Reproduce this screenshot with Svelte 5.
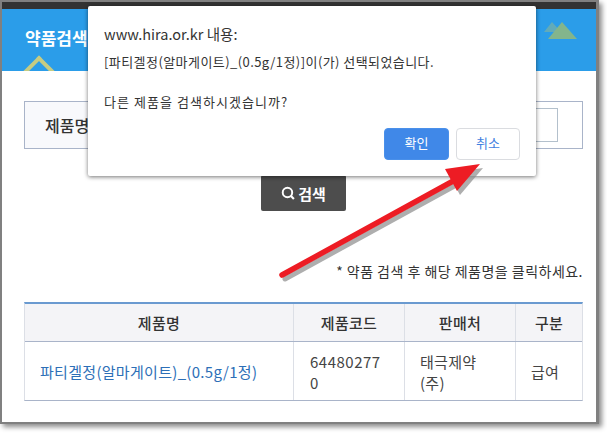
<script>
  const columns = [
    { label: '제품명', cls: 'c1' },
    { label: '제품코드', cls: 'c2' },
    { label: '판매처', cls: 'c3' },
    { label: '구분', cls: 'c4' }
  ];
</script>

<div class="stage">
  <div class="window">
    <div class="topbar"></div>
    <header class="hero">
      <h1>약품검색</h1>
      <span class="notch"></span>
      <svg class="peaks" width="34" height="18" viewBox="0 0 34 18">
        <path d="M0 10 L8 0 L17 10Z" fill="#76b0a8" opacity=".75" />
        <path d="M4 17 L18 0 L33 17Z" fill="#83b58c" />
      </svg>
    </header>
    <main class="content">
      <section class="searchbox">
        <div class="label">제품명</div>
        <div class="field"><div class="input"></div></div>
      </section>
      <div class="actions">
        <button class="search">
          <svg width="14" height="14" viewBox="0 0 13 13">
            <circle cx="6" cy="6" r="4.4" fill="none" stroke="#fff" stroke-width="1.8" />
            <path d="M9 9 L12 12" stroke="#fff" stroke-width="2" />
          </svg>
          검색
        </button>
      </div>
      <p class="note">* 약품 검색 후 해당 제품명을 클릭하세요.</p>
      <div class="table">
        <div class="row head">
          {#each columns as col}
            <div class="cell {col.cls}">{col.label}</div>
          {/each}
        </div>
        <div class="row body">
          <div class="cell c1 link">파티겔정(알마게이트)_(0.5g/1정)</div>
          <div class="cell c2 left">64480277<br />0</div>
          <div class="cell c3 left">태극제약<br />(주)</div>
          <div class="cell c4 tag">급여</div>
        </div>
      </div>
    </main>
  </div>

  <div class="dialog">
    <div class="origin">www.hira.or.kr 내용:</div>
    <div class="message">[파티겔정(알마게이트)_(0.5g/1정)]이(가) 선택되었습니다.</div>
    <div class="message second">다른 제품을 검색하시겠습니까?</div>
    <div class="buttons">
      <button class="ok">확인</button>
      <button class="cancel">취소</button>
    </div>
  </div>

  <svg class="arrow" width="607" height="433" viewBox="0 0 607 433">
    <g transform="translate(3 4)" opacity=".7">
      <path d="M282 275 L455 180" stroke="#8c8c8c" stroke-width="5" stroke-linecap="round" />
      <path d="M445 169 L480 164 L457 191Z" fill="#8c8c8c" />
    </g>
    <path d="M282 275 L455 180" stroke="#ed1c24" stroke-width="5.5" stroke-linecap="round" />
    <path d="M445 169 L480 164 L457 191Z" fill="#ed1c24" />
  </svg>
</div>

<style>
  :global(body) {
    margin: 0;
    background: #fff;
  }
  .stage {
    position: relative;
    width: 607px;
    height: 433px;
    overflow: hidden;
    font-family: "Noto Sans CJK KR", "Noto Sans", sans-serif;
    color: #333;
  }
  .window {
    box-sizing: border-box;
    width: 599px;
    height: 424px;
    border: solid #808080;
    border-width: 2px 3px 2px 2px;
    background: #fff;
    box-shadow: 3px 3px 5px rgba(0, 0, 0, 0.45);
  }
  .topbar {
    height: 7px;
    background: #333;
  }
  .hero {
    position: relative;
    height: 62px;
    box-sizing: border-box;
    padding: 16px 0 0 23px;
    background: #2b9de9;
    overflow: hidden;
  }
  .hero h1 {
    margin: 0;
    font-size: 17px;
    line-height: 26px;
    font-weight: 700;
    color: #fff;
  }
  .notch {
    position: absolute;
    left: 26px;
    top: 51px;
    width: 18px;
    height: 18px;
    border: solid #c6cc82;
    border-width: 4px 0 0 4px;
    transform: rotate(45deg);
  }
  .peaks {
    position: absolute;
    right: 18px;
    top: 13px;
  }
  .content {
    padding: 30px 13px 0 22px;
  }
  .searchbox {
    display: flex;
    height: 48px;
    box-sizing: border-box;
    border: 1px solid #a9b4c9;
  }
  .label {
    width: 110px;
    padding: 0 0 0 20px;
    box-sizing: border-box;
    background: #f8f9fc;
    font-size: 16px;
    font-weight: 500;
    line-height: 46px;
    color: #333;
  }
  .field {
    flex: 1;
    display: flex;
    justify-content: flex-end;
    padding: 6px 24px 6px 0;
  }
  .input {
    width: 120px;
    box-sizing: border-box;
    border: 1px solid #b3c0cc;
  }
  .actions {
    display: flex;
    justify-content: center;
    padding-top: 26px;
  }
  .search {
    display: flex;
    align-items: center;
    justify-content: center;
    gap: 3px;
    width: 85px;
    height: 36px;
    border: 0;
    border-radius: 2px;
    background: #4d4d4d;
    color: #fff;
    font: 700 15px "Noto Sans CJK KR", sans-serif;
  }
  .note {
    margin: 48px 0 0;
    text-align: right;
    font-size: 14px;
    line-height: 24px;
    letter-spacing: 0.48px;
    color: #333;
  }
  .table {
    margin-top: 19px;
    border-top: 2px solid #6a9ad0;
    border-left: 1px solid #dcdfe6;
    border-right: 1px solid #dcdfe6;
    border-bottom: 1px solid #a9b4c9;
  }
  .row {
    display: grid;
    grid-template-columns: 269px 111px 111px 1fr;
  }
  .head {
    height: 37px;
    background: #f4f4f7;
    border-bottom: 1px solid #a9b4c9;
  }
  .body {
    height: 58px;
  }
  .cell {
    display: flex;
    align-items: center;
    justify-content: center;
    box-sizing: border-box;
    border-right: 1px solid #dcdfe6;
    line-height: 21px;
  }
  .cell:last-child {
    border-right: 0;
  }
  .head .cell {
    font-weight: 500;
    font-size: 15px;
    letter-spacing: 0.3px;
    color: #333;
  }
  .body .cell {
    font-size: 15px;
    color: #444;
    letter-spacing: 0.3px;
  }
  .body .link {
    justify-content: flex-start;
    padding-left: 15px;
    color: #2d6fb7;
  }
  .body .left {
    display: block;
    padding: 9px 0 0 15px;
    text-align: left;
  }
  .body .c2 {
    padding-left: 16px;
    letter-spacing: 0.5px;
  }
  .body .tag {
    justify-content: flex-start;
    padding-left: 15px;
  }
  .dialog {
    position: absolute;
    left: 88px;
    top: 6px;
    width: 448px;
    height: 170px;
    box-sizing: border-box;
    padding: 17px 16px 0 16px;
    background: #fff;
    border-radius: 2px;
    box-shadow: 0 1px 4px rgba(0, 0, 0, 0.55);
    color: #333;
  }
  .origin {
    font-size: 14.5px;
    line-height: 21px;
  }
  .message {
    margin-top: 8px;
    font-size: 13px;
    line-height: 20px;
    letter-spacing: 0.43px;
  }
  .second {
    margin-top: 20px;
    letter-spacing: 1.05px;
  }
  .buttons {
    position: absolute;
    right: 16px;
    bottom: 16px;
    display: flex;
    gap: 7px;
  }
  .buttons button {
    height: 32px;
    box-sizing: border-box;
    border-radius: 4px;
    font: 13px "Noto Sans CJK KR", sans-serif;
    padding: 0 0 3px;
  }
  .ok {
    width: 65px;
    border: 1px solid #4a90ea;
    background: #4088e8;
    color: #fff;
  }
  .cancel {
    width: 64px;
    border: 1px solid #dadce0;
    background: #fff;
    color: #3f7fe0;
  }
  .arrow {
    position: absolute;
    left: 0;
    top: 0;
    pointer-events: none;
  }
</style>
